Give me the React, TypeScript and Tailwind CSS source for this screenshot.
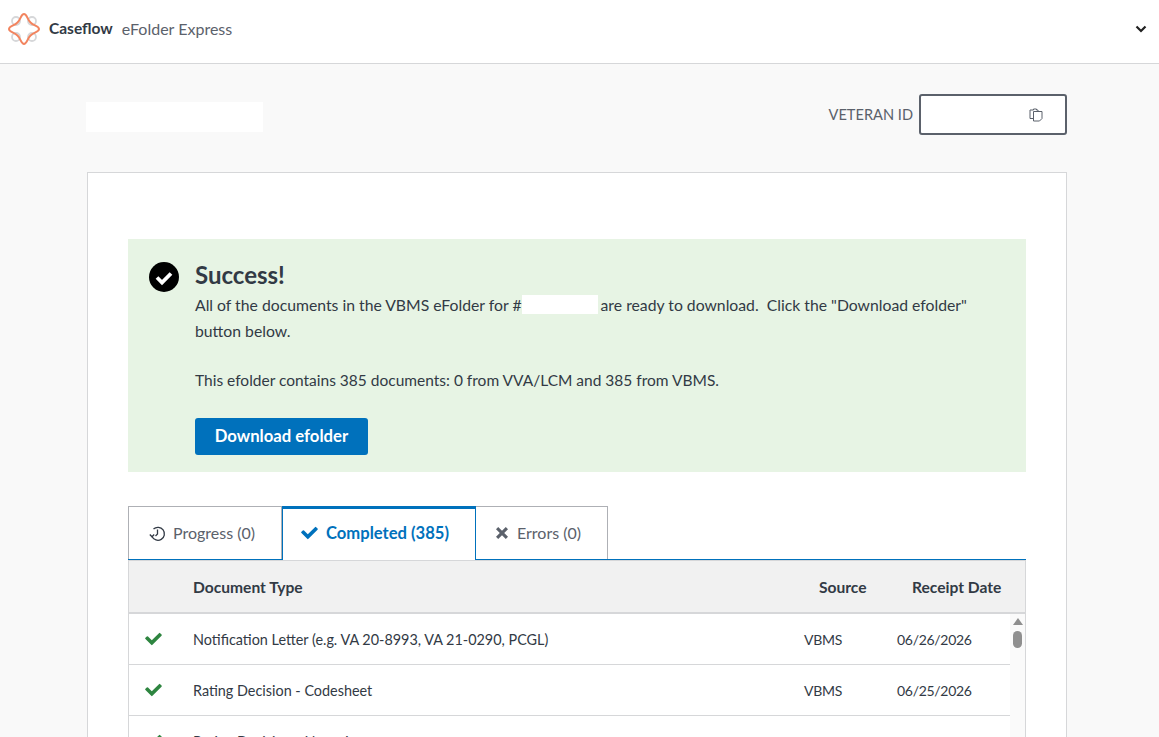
import React from "react";

const font = { fontFamily: '"Lato", "Noto Sans", sans-serif' };

function Logo() {
  return (
    <svg width="34" height="34" viewBox="0 0 34 34" fill="none" className="shrink-0">
      <g stroke="#d6d7d9" strokeWidth="1.8">
        <circle cx="9" cy="9" r="4" />
        <circle cx="25" cy="9" r="4" />
        <circle cx="9" cy="25" r="4" />
        <circle cx="25" cy="25" r="4" />
      </g>
      <path
        d="M17 2C20 2 20 7 23.500 10.500C27 14 32 14 32 17C32 20 27 20 23.500 23.500C20 27 20 32 17 32C14 32 14 27 10.500 23.500C7 20 2 20 2 17C2 14 7 14 10.500 10.500C14 7 14 2 17 2Z"
        stroke="#f2845f"
        strokeWidth="2"
        strokeLinejoin="round"
      />
    </svg>
  );
}

function Check({ size, color }: { size: number; color: string }) {
  return (
    <svg width={size} height={size * 0.78} viewBox="0 0 18 14" fill={color}>
      <path d="M6.600 13.600 0.500 7.500a.9.9 0 0 1 0-1.300L1.900 4.800a.9.900 0 0 1 1.300 0L7.200 8.800 14.800 1.200a.9.900 0 0 1 1.300 0l1.400 1.400a.9.900 0 0 1 0 1.300L7.900 13.600a.9.900 0 0 1-1.300 0z" />
    </svg>
  );
}

function Row({ name, date }: { name: string; date: string }) {
  return (
    <div className="flex h-[51px] shrink-0 items-center border-b border-[#d6d7d9] pr-[53px] text-[#323a45]">
      <div className="flex w-[64px] pl-[16px]">
        <Check size={17} color="#2e8540" />
      </div>
      <div className="flex-1 pt-[1px] text-[14.4px]">{name}</div>
      <div className="w-[93px] text-[14px] tracking-[-0.3px]">VBMS</div>
      <div className="w-[75px] whitespace-nowrap text-[14px] tracking-[-0.3px]">{date}</div>
    </div>
  );
}

export default function App() {
  return (
    <div className="h-screen overflow-hidden bg-[#f9f9f9]" style={font}>
      <header className="flex h-[64px] items-center justify-between border-b border-[#d6d7d9] bg-white pb-[5px] pl-[7px] pr-[12px]">
        <div className="flex items-center gap-[8px]">
          <Logo />
          <span className="text-[15.5px] font-bold text-[#323a45]">Caseflow</span>
          <span className="ml-[1px] text-[16px] text-[#5b616b]">eFolder Express</span>
        </div>
        <svg width="12" height="8" viewBox="0 0 12 8" fill="none" stroke="#212121" strokeWidth="2.200">
          <path d="M1.500 1.500 6 6l4.500-4.500" />
        </svg>
      </header>

      <main className="ml-[87px] w-[980px]">
        <div className="flex h-[108px] items-start justify-between">
          <div className="-ml-px mt-[38px] h-[30px] w-[177px] bg-white" />
          <div className="mt-[30px] flex items-center gap-[6px]">
            <span className="pt-[1px] text-[14.6px] leading-[22px] text-[#5b616b]">VETERAN ID</span>
            <div className="flex h-[41px] w-[148px] items-center justify-end rounded-[3px] border-2 border-[#5b616b] bg-white pr-[22px]">
              <svg width="14" height="14" viewBox="0 0 14 14" fill="none" stroke="#5b616b" strokeWidth="1">
                <path d="M9 3.500V2H7.500V1h-3v1H1v8.500h3.500" />
                <path d="M4.500 3.500h8.500v7l-2.500 2.500H4.500z" />
              </svg>
            </div>
          </div>
        </div>

        <section className="h-[600px] border border-[#d6d7d9] bg-white px-[40px] pt-[66px]">
          <div className="flex h-[233px] bg-[#e7f4e4] pl-[21px] pt-[23px]">
            <svg width="30" height="30" viewBox="0 0 30 30" className="shrink-0">
              <circle cx="15" cy="15" r="15" fill="#000" />
              <path d="M8 15.500l5 5 9-9" fill="none" stroke="#fff" strokeWidth="3.800" />
            </svg>
            <div className="ml-[16px] w-[800px] text-[#323a45]">
              <h2 className="text-[24px] font-bold leading-[26px]">Success!</h2>
              <p className="mt-[4px] text-[15.75px] leading-[26px]">
                All of the documents in the VBMS eFolder for #
                <span className="mr-[3px] inline-block h-[19px] w-[76px] bg-white align-[-3px]" />
                are ready to download.&nbsp; Click the "Download efolder" button below.
              </p>
              <p className="mt-[23px] text-[15.5px] leading-[26px]">
                This efolder contains 385 documents: 0 from VVA/LCM and 385 from VBMS.
              </p>
              <button className="mt-[25px] h-[37px] w-[173px] rounded-[3px] bg-[#0071bc] text-[16.7px] font-bold text-white">
                Download efolder
              </button>
            </div>
          </div>

          <div className="mt-[34px] flex h-[54px] items-stretch border-b border-[#0071bc] text-[16px]">
            <div className="flex w-[154px] items-center gap-[7px] border border-b-0 border-[#aeb0b5] pl-[20px] text-[#5b616b]">
              <svg width="17" height="17" viewBox="0 0 17 17" fill="none" stroke="#323a45" strokeWidth="1.300">
                <path d="M3 11.500A6.500 6.500 0 1 0 4.500 4" />
                <path d="M8.500 4.500v4.500l-2 2" />
                <path d="M0.800 9.500 3 11.800 5.200 9.500" />
              </svg>
              Progress (0)
            </div>
            <div className="-mb-px flex w-[194px] items-center gap-[8px] border-x border-t-[3px] border-x-[#0071bc] border-t-[#0071bc] bg-white pb-[3px] pl-[18px] text-[16.6px] font-bold text-[#0071bc]">
              <Check size={17} color="#0071bc" />
              Completed (385)
            </div>
            <div className="flex w-[132px] items-center gap-[8px] border-r border-t border-[#aeb0b5] pl-[19px] text-[#5b616b]">
              <svg width="14" height="14" viewBox="0 0 14 14" fill="#5b616b">
                <path d="M1 3.200 3.200 1 7 4.800 10.800 1 13 3.200 9.200 7 13 10.800 10.800 13 7 9.200 3.200 13 1 10.800 4.800 7z" />
              </svg>
              Errors (0)
            </div>
          </div>

          <div className="relative border-x border-[#d6d7d9]">
            <div className="flex h-[54px] items-center border-b-2 border-t border-b-[#d6d7d9] border-t-[#d6d7d9] bg-[#f1f1f1] pr-[25px] pt-[2px] text-[15.6px] font-bold text-[#323a45]">
              <div className="w-[64px]" />
              <div className="flex-1">Document Type</div>
              <div className="w-[93px]">Source</div>
              <div className="w-[88px] whitespace-nowrap">Receipt Date</div>
            </div>
            <div className="flex flex-col">
              <Row name="Notification Letter (e.g. VA 20-8993, VA 21-0290, PCGL)" date="06/26/2026" />
              <Row name="Rating Decision - Codesheet" date="06/25/2026" />
              <Row name="Rating Decision - Narrative" date="06/25/2026" />
            </div>
            <div className="absolute right-0 top-[54px] flex h-[200px] w-[15px] flex-col items-center bg-[#fafafa] pt-[4px]">
              <div className="h-0 w-0 border-x-[5px] border-b-[7px] border-x-transparent border-b-[#8f8f8f]" />
              <div className="mt-[6px] h-[17px] w-[9px] rounded-full bg-[#8f8f8f]" />
            </div>
          </div>
        </section>
      </main>
    </div>
  );
}
